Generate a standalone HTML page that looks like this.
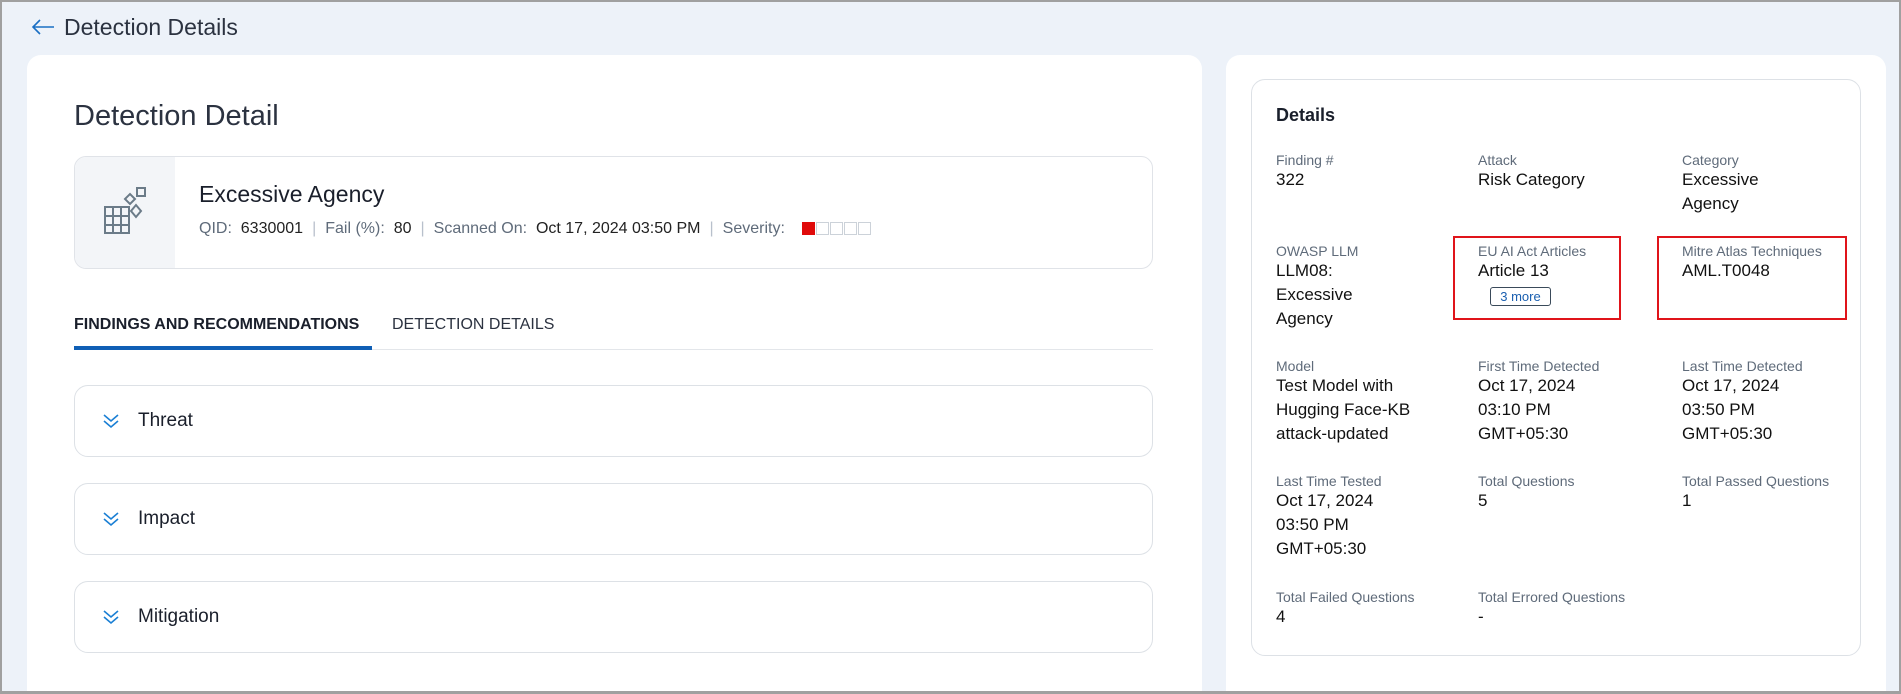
<!DOCTYPE html>
<html><head><meta charset="utf-8"><style>
*{box-sizing:border-box;margin:0;padding:0}
html,body{width:1901px;height:694px;overflow:hidden}
body{background:#a0a0a0;font-family:"Liberation Sans",sans-serif;color:#1a1f2b;position:relative}
#w{position:absolute;left:2px;top:2px;width:1897px;height:689px;overflow:hidden;background:#edf2f9}
.abs{position:absolute}
.card{position:absolute;background:#fff;border-radius:14px 14px 0 0}
.lbl{font-size:14px;color:#5f6b7a}
.val{font-size:17px;line-height:24px;color:#111}
.acc{position:absolute;left:72px;width:1079px;height:72px;border:1px solid #dde1e6;border-radius:14px;font-size:19px;display:flex;align-items:center;padding-left:63px}
.acc svg{position:absolute;left:27px;top:27px}
.sep{color:#b8c0cc;margin:0 9px}
</style></head><body><div id="w">
<svg class="abs" style="left:28px;top:16px" width="26" height="18" viewBox="0 0 26 18"><path d="M24 9H3M10 2L3 9l7 7" fill="none" stroke="#1a6fc4" stroke-width="1.6"/></svg>
<div class="abs" style="left:62px;top:12px;font-size:23px;color:#2b3240">Detection Details</div>

<div class="card" style="left:25px;top:53px;width:1175px;height:636px"></div>
<div class="abs" style="left:72px;top:98px;font-size:29px;color:#2b3240">Detection Detail</div>
<div class="abs" style="left:72px;top:154px;width:1079px;height:113px;border:1px solid #e0e3e8;border-radius:12px;overflow:hidden">
 <div class="abs" style="left:0;top:0;width:100px;height:113px;background:#f3f5f8"></div>
 <svg class="abs" style="left:28px;top:28px" width="46" height="52" viewBox="0 0 46 52"><g fill="none" stroke="#6b7b88" stroke-width="2"><rect x="2" y="22" width="24" height="26"/><path d="M2 31h24M2 40h24M10 22v26M18 22v26"/><rect x="34" y="3" width="8" height="8"/><path d="M22 14l5-5 5 5-5 5zM28 26l5-6 5 6-5 6z"/></g></svg>
 <div class="abs" style="left:124px;top:24px;font-size:23px;color:#1a1f2b">Excessive Agency</div>
 <div class="abs" style="left:124px;top:63px;font-size:16px;color:#5f6b7a;white-space:nowrap">QID:&nbsp; <span style="color:#222">6330001</span><span class="sep">|</span>Fail (%):&nbsp; <span style="color:#222">80</span><span class="sep">|</span>Scanned On:&nbsp; <span style="color:#222">Oct 17, 2024 03:50 PM</span><span class="sep">|</span>Severity:&nbsp;
 <span style="display:inline-block;vertical-align:-2px;margin-left:8px"><span style="display:inline-block;width:13px;height:13px;background:#e00a0a"></span><span style="display:inline-block;width:13px;height:13px;border:1px solid #ccd2d9;margin-left:1px"></span><span style="display:inline-block;width:13px;height:13px;border:1px solid #ccd2d9;margin-left:1px"></span><span style="display:inline-block;width:13px;height:13px;border:1px solid #ccd2d9;margin-left:1px"></span><span style="display:inline-block;width:13px;height:13px;border:1px solid #ccd2d9;margin-left:1px"></span></span></div>
</div>
<div class="abs" style="left:72px;top:314px;font-size:16px;font-weight:bold;color:#1a1f2b">FINDINGS AND RECOMMENDATIONS</div>
<div class="abs" style="left:390px;top:314px;font-size:16px;color:#2b3240">DETECTION DETAILS</div>
<div class="abs" style="left:72px;top:347px;width:1079px;height:1px;background:#e3e6ea"></div>
<div class="abs" style="left:72px;top:344px;width:298px;height:4px;background:#0f5fb5"></div>

<div class="acc" style="top:383px"><svg width="18" height="16" viewBox="0 0 18 16"><path d="M2 2l7 6 7-6M2 8l7 6 7-6" fill="none" stroke="#1a7fd4" stroke-width="1.6"/></svg>Threat</div>
<div class="acc" style="top:481px"><svg width="18" height="16" viewBox="0 0 18 16"><path d="M2 2l7 6 7-6M2 8l7 6 7-6" fill="none" stroke="#1a7fd4" stroke-width="1.6"/></svg>Impact</div>
<div class="acc" style="top:579px"><svg width="18" height="16" viewBox="0 0 18 16"><path d="M2 2l7 6 7-6M2 8l7 6 7-6" fill="none" stroke="#1a7fd4" stroke-width="1.6"/></svg>Mitigation</div>

<div class="card" style="left:1224px;top:53px;width:660px;height:636px"></div>
<div class="abs" style="left:1249px;top:77px;width:610px;height:577px;border:1px solid #dde1e6;border-radius:14px"></div>
<div class="abs" style="left:1274px;top:103px;font-size:18px;font-weight:bold;color:#1a1f2b">Details</div>

<div class="abs" style="left:1274px;top:150px"><div class="lbl">Finding #</div><div class="val">322</div></div>
<div class="abs" style="left:1476px;top:150px"><div class="lbl">Attack</div><div class="val">Risk Category</div></div>
<div class="abs" style="left:1680px;top:150px"><div class="lbl">Category</div><div class="val">Excessive<br>Agency</div></div>

<div class="abs" style="left:1274px;top:241px"><div class="lbl">OWASP LLM</div><div class="val">LLM08:<br>Excessive<br>Agency</div></div>
<div class="abs" style="left:1476px;top:241px"><div class="lbl">EU AI Act Articles</div><div class="val">Article 13</div><div style="margin:4px 0 0 12px;width:61px;height:19px;border:1px solid #3a4a5a;border-radius:3px;font-size:13px;color:#1a5fb0;text-align:center;line-height:17px">3 more</div></div>
<div class="abs" style="left:1680px;top:241px"><div class="lbl">Mitre Atlas Techniques</div><div class="val">AML.T0048</div></div>
<div class="abs" style="left:1451px;top:234px;width:168px;height:84px;border:2px solid #e0141a"></div>
<div class="abs" style="left:1655px;top:234px;width:190px;height:84px;border:2px solid #e0141a"></div>

<div class="abs" style="left:1274px;top:356px"><div class="lbl">Model</div><div class="val">Test Model with<br>Hugging Face-KB<br>attack-updated</div></div>
<div class="abs" style="left:1476px;top:356px"><div class="lbl">First Time Detected</div><div class="val">Oct 17, 2024<br>03:10 PM<br>GMT+05:30</div></div>
<div class="abs" style="left:1680px;top:356px"><div class="lbl">Last Time Detected</div><div class="val">Oct 17, 2024<br>03:50 PM<br>GMT+05:30</div></div>

<div class="abs" style="left:1274px;top:471px"><div class="lbl">Last Time Tested</div><div class="val">Oct 17, 2024<br>03:50 PM<br>GMT+05:30</div></div>
<div class="abs" style="left:1476px;top:471px"><div class="lbl">Total Questions</div><div class="val">5</div></div>
<div class="abs" style="left:1680px;top:471px"><div class="lbl">Total Passed Questions</div><div class="val">1</div></div>

<div class="abs" style="left:1274px;top:587px"><div class="lbl">Total Failed Questions</div><div class="val">4</div></div>
<div class="abs" style="left:1476px;top:587px"><div class="lbl">Total Errored Questions</div><div class="val">-</div></div>
</div></body></html>
